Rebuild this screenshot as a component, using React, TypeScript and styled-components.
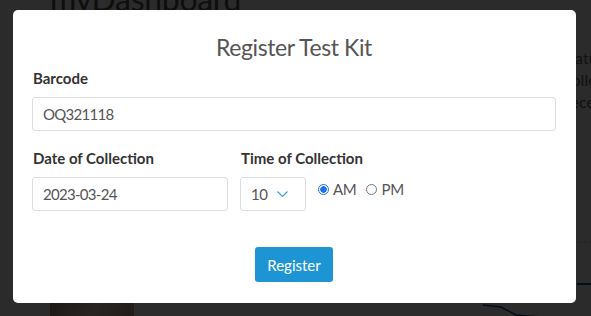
import styled, { createGlobalStyle } from 'styled-components';

const GlobalStyle = createGlobalStyle`
    html, body {
        margin: 0;
        padding: 0;
        width: 591px;
        height: 316px;
        overflow: hidden;
        font-family: Lato, "Liberation Sans", sans-serif;
        background: #fff;
    }
`;

const App = () => {
    return (
        <>
            <GlobalStyle />
            <Page>
                <PageHeader>myDashboard</PageHeader>
                <PageBody>
                    <Photo />
                    <SidePanel>
                        <SideLine>Status</SideLine>
                        <SideLine>Collected</SideLine>
                        <SideLine>Received</SideLine>
                        <Chart viewBox="0 0 160 90">
                            <line x1="0" y1="12" x2="160" y2="12" stroke="#999" strokeDasharray="1 2" />
                            <line x1="146" y1="54" x2="160" y2="54" stroke="#1d4f91" strokeWidth="2" />
                            <polyline points="52,75 70,77 85,85 110,87 160,88" fill="none" stroke="#1d4f91" strokeWidth="1.5" />
                        </Chart>
                    </SidePanel>
                </PageBody>
            </Page>
            <Overlay>
                <Modal>
                    <Title>Register Test Kit</Title>
                    <Field>
                        <Label>Barcode</Label>
                        <TextInput defaultValue="OQ321118" />
                    </Field>
                    <Row>
                        <Field $width="196px">
                            <Label>Date of Collection</Label>
                            <TextInput defaultValue="2023-03-24" />
                        </Field>
                        <Field>
                            <Label>Time of Collection</Label>
                            <TimeRow>
                                <Select>
                                    <span>10</span>
                                    <svg width="11" height="6" viewBox="0 0 11 6">
                                        <polyline points="0.5,0.5 5.5,5.5 10.5,0.5" fill="none" stroke="#3a9fd8" strokeWidth="1.1" />
                                    </svg>
                                </Select>
                                <RadioGroup>
                                    <RadioLabel>
                                        <Radio $checked />
                                        AM
                                    </RadioLabel>
                                    <RadioLabel>
                                        <Radio />
                                        PM
                                    </RadioLabel>
                                </RadioGroup>
                            </TimeRow>
                        </Field>
                    </Row>
                    <Footer>
                        <Button>Register</Button>
                    </Footer>
                </Modal>
            </Overlay>
        </>
    );
};

const Page = styled.div`
    width: 591px;
    height: 316px;
    padding-left: 50px;
    box-sizing: border-box;
`;

const PageHeader = styled.h1`
    margin: 0;
    margin-top: -17px;
    font-size: 32px;
    line-height: 32px;
    font-weight: 400;
    letter-spacing: -0.3px;
    color: #555;
`;

const PageBody = styled.div`
    display: flex;
    justify-content: space-between;
`;

const Photo = styled.div`
    margin-top: 263px;
    width: 84px;
    height: 40px;
    background: radial-gradient(circle at 60% 30%, #b43a3a 0 3px, transparent 4px), linear-gradient(120deg, #9a7a70, #e8d8d0 60%, #c0a090);
`;

const SidePanel = styled.div`
    width: 160px;
    padding-top: 32px;
    display: flex;
    flex-direction: column;
    align-items: flex-end;
`;

const SideLine = styled.div`
    font-size: 16px;
    line-height: 22px;
    color: #666;
    width: 30px;
    overflow: hidden;
    white-space: nowrap;
`;

const Chart = styled.svg`
    width: 160px;
    height: 90px;
    margin-top: 117px;
`;

const Overlay = styled.div`
    position: fixed;
    inset: 0;
    background: rgba(0, 0, 0, 0.83);
    padding: 10px 0 0 13px;
`;

const Modal = styled.div`
    width: 563px;
    height: 293px;
    box-sizing: border-box;
    background: #fff;
    border-radius: 5px;
    padding: 22px 20px 0 19px;
`;

const Title = styled.h2`
    margin: 0 0 6px;
    text-align: center;
    font-size: 23px;
    font-weight: 400;
    letter-spacing: -0.4px;
    color: #555;
    line-height: 30px;
`;

const Field = styled.div<{ $width?: string }>`
    display: flex;
    flex-direction: column;
    width: ${(p) => p.$width || 'auto'};
`;

const Label = styled.label`
    font-size: 15px;
    font-weight: 700;
    color: #333;
    line-height: 20px;
    margin-bottom: 9px;
    padding-left: 1px;
`;

const TextInput = styled.input`
    height: 34px;
    box-sizing: border-box;
    border: 1px solid #ddd;
    border-radius: 3px;
    padding: 0 10px;
    font-family: inherit;
    font-size: 15px;
    letter-spacing: -0.7px;
    color: #555;
    outline: none;
`;

const Row = styled.div`
    display: flex;
    gap: 12px;
    margin-top: 17px;
`;

const TimeRow = styled.div`
    display: flex;
    align-items: flex-start;
    gap: 12px;
`;

const Select = styled.div`
    width: 66px;
    height: 34px;
    box-sizing: border-box;
    border: 1px solid #ddd;
    border-radius: 3px;
    display: flex;
    align-items: center;
    justify-content: space-between;
    padding: 0 17px 0 10px;
    font-size: 15px;
    letter-spacing: -0.5px;
    color: #555;
`;

const RadioGroup = styled.div`
    display: flex;
    gap: 10px;
    padding-top: 3px;
`;

const RadioLabel = styled.label`
    display: flex;
    align-items: center;
    gap: 4px;
    font-size: 15px;
    letter-spacing: -0.3px;
    color: #555;
`;

const Radio = styled.span<{ $checked?: boolean }>`
    width: 11px;
    height: 11px;
    box-sizing: border-box;
    border-radius: 50%;
    border: 1px solid ${(p) => (p.$checked ? '#1a73e8' : '#777')};
    background: ${(p) => (p.$checked ? 'radial-gradient(circle, #1a73e8 0 3px, #fff 3.5px)' : '#fff')};
`;

const Footer = styled.div`
    display: flex;
    justify-content: center;
    margin-top: 36px;
`;

const Button = styled.button`
    width: 78px;
    height: 35px;
    border: none;
    border-radius: 3px;
    background: #1d95d4;
    color: #fff;
    font-family: inherit;
    font-size: 15px;
    cursor: pointer;
`;

export default App;
